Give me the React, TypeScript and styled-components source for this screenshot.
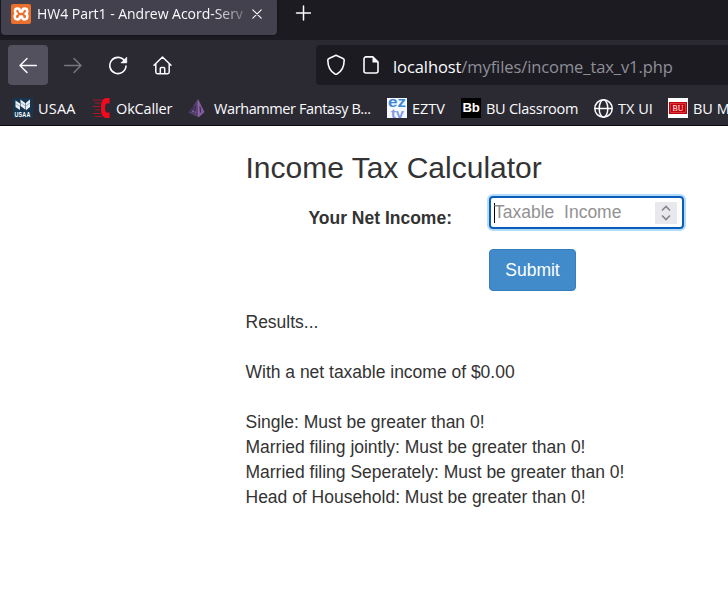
import React from "react";
import styled, { createGlobalStyle } from "styled-components";

const GlobalStyle = createGlobalStyle`
  * { box-sizing: border-box; }
  html, body { margin: 0; padding: 0; background: #fff; overflow: hidden; }
  svg { display: block; flex: none; }
`;

const Window = styled.div`
  width: 728px;
  height: 607px;
  overflow: hidden;
  display: flex;
  flex-direction: column;
  background: #fff;
`;

const Chrome = styled.header`
  flex: none;
  height: 126px;
  background: #2b2a33;
  border-bottom: 1px solid #0c0c0d;
  font-family: "Open Sans", "Noto Sans", sans-serif;
  color: #fbfbfe;
  overflow: hidden;
`;

const TabStrip = styled.div`
  display: flex;
  height: 40px;
  background: #1c1b22;
`;

const Tab = styled.div`
  display: flex;
  align-items: center;
  width: 276px;
  height: 35px;
  margin-left: 1px;
  padding: 0 10px 8px;
  background: #42414d;
  border-radius: 0 0 4px 4px;
  box-shadow: 0 0 3px rgba(0, 0, 0, 0.5);
`;

const TabTitle = styled.div`
  width: 215px;
  margin-left: 6px;
  overflow: hidden;
  white-space: pre;
  font-size: 14px;
  line-height: 20px;
  letter-spacing: -0.03px;
  mask-image: linear-gradient(to right, #000 176px, transparent 218px);
`;

const NewTab = styled.div`
  margin: 5px 0 0 18px;
`;

const Toolbar = styled.div`
  display: flex;
  align-items: center;
  height: 50px;
  padding-left: 8px;
`;

const NavButton = styled.div<{ $active?: boolean }>`
  display: flex;
  align-items: center;
  justify-content: center;
  width: 40px;
  height: 40px;
  margin-right: 5px;
  border-radius: 4px;
  background: ${(p) => (p.$active ? "#52515d" : "transparent")};
`;

const AddressBar = styled.div`
  display: flex;
  align-items: center;
  flex: 1;
  height: 40px;
  margin-left: 128px;
  padding-left: 10px;
  border-radius: 4px 0 0 4px;
  background: #1c1b22;
`;

const PageGap = styled.div`
  margin-left: 17px;
`;

const Address = styled.div`
  margin: 3px 0 0 14px;
  white-space: pre;
  font-size: 16.5px;
  line-height: 22px;
  letter-spacing: -0.09px;
  color: #8f8f98;
`;

const Host = styled.span`
  color: #fbfbfe;
`;

const Bookmarks = styled.div`
  display: flex;
  height: 35px;
  padding: 8px 0 0 13px;
`;

const Bookmark = styled.div<{ $width: number; $gap?: number; $spacing?: number }>`
  display: flex;
  flex: none;
  width: ${(p) => p.$width}px;
  height: 21px;
  gap: ${(p) => p.$gap ?? 5}px;
  white-space: pre;
  font-size: 14.5px;
  line-height: 22px;
  letter-spacing: ${(p) => p.$spacing ?? 0}px;
`;

const Page = styled.main`
  width: 482px;
  margin-left: 246px;
  font-family: "Liberation Sans", Arial, sans-serif;
  font-size: 17.5px;
  line-height: 25px;
  color: #333;
`;

const Title = styled.h3`
  margin: 25px 0 12px -0.5px;
  font-size: 30px;
  line-height: 33px;
  font-weight: 400;
  white-space: nowrap;
`;

const FormRow = styled.div`
  display: flex;
  height: 53px;
`;

const Label = styled.label`
  width: 206px;
  padding-top: 10px;
  margin-right: 37px;
  text-align: right;
  font-weight: 700;
`;

const NumberField = styled.div`
  display: flex;
  align-items: center;
  width: 195px;
  height: 33px;
  padding: 0 5px 0 3px;
  border: 2px solid #0a5cbd;
  border-radius: 4px;
  box-shadow: 0 0 0 2px #b3dcf9;
`;

const Caret = styled.div`
  width: 1px;
  height: 20px;
  margin-right: -1px;
  background: #000;
`;

const Placeholder = styled.div`
  flex: 1;
  white-space: pre;
  line-height: 25px;
  padding-bottom: 1px;
  color: #929292;
`;

const Spinner = styled.div`
  display: flex;
  align-items: center;
  justify-content: center;
  width: 22px;
  height: 22px;
  background: #e9e9ed;
`;

const SubmitButton = styled.button`
  display: block;
  width: 87px;
  height: 42px;
  margin: 0 0 19px 243px;
  padding: 0;
  border: 1px solid #357ebd;
  border-radius: 4px;
  background: #428bca;
  color: #fff;
  font: 17.5px/25px "Liberation Sans", Arial, sans-serif;
`;

const Results = styled.div`
  white-space: pre;
  letter-spacing: -0.01px;
`;

const ResultLine = styled.p<{ $after?: boolean }>`
  margin: 0 0 ${(p) => (p.$after ? 25 : 0)}px -0.5px;
`;

const stroke = { fill: "none", stroke: "#fbfbfe", strokeLinecap: "round", strokeLinejoin: "round" } as const;

const XamppIcon = () => (
  <svg width="20" height="20" viewBox="0 0 20 20">
    <rect width="20" height="20" rx="2" fill="#e9712d" />
    <path d="M5.600 9.700C3.300 8.800 3.400 4.600 6.400 4.600c2 0 2.600 1.200 2.600 2.900h2.200c0-1.700.6-2.900 2.600-2.900 3 0 3.200 4.200.8 5.100 2.700 1.100 2.300 5.700-.9 5.700-2 0-2.700-1.200-2.700-2.900H9c0 1.700-.7 2.900-2.700 2.900-3.200 0-3.500-4.600-.7-5.700z" fill="none" stroke="#fff" strokeWidth="2.500" strokeLinejoin="round" />
  </svg>
);

const CloseIcon = () => (
  <svg width="10" height="10" viewBox="0 0 10 10"><path d="M.8.8l8.4 8.4M9.2.8L.8 9.2" {...stroke} strokeWidth="1.15" /></svg>
);

const PlusIcon = () => (
  <svg width="16" height="16" viewBox="0 0 16 16"><path d="M8.500 1v14M1.500 8h14" {...stroke} strokeWidth="1.5" /></svg>
);

const ArrowIcon = ({ forward = false }: { forward?: boolean }) => (
  <svg width="20" height="20" viewBox="0 0 20 20">
    <path d={forward ? "M1.7 10.5h16.2M11 3.5l7 7-7 7" : "M18.3 10.5H2.1M9 3.5l-7 7 7 7"} {...stroke} stroke={forward ? "#777681" : "#fbfbfe"} strokeWidth="1.5" />
  </svg>
);

const ReloadIcon = () => (
  <svg width="20" height="20" viewBox="0 0 20 20">
    <path d="M16.8 6.2A8.1 8.1 0 1 0 18 11" {...stroke} strokeWidth="1.6" />
    <path d="M18.8 2v6h-6z" fill="#fbfbfe" stroke="#fbfbfe" strokeWidth=".5" strokeLinejoin="round" />
  </svg>
);

const HomeIcon = () => (
  <svg width="20" height="20" viewBox="0 0 20 20">
    <path d="M1 10.3L9.500 2l8.500 8.3M2.800 9v8.1a1.7 1.7 0 0 0 1.7 1.7h10a1.7 1.7 0 0 0 1.7-1.7V9M7.300 18.5v-5a1 1 0 0 1 1-1h2.4a1 1 0 0 1 1 1v5" {...stroke} strokeWidth="1.5" />
  </svg>
);

const ShieldIcon = () => (
  <svg width="20" height="22" viewBox="0 0 20 22">
    <path d="M10 1.3l7 3.1c.8.3 1.2 1 1.2 1.8-.1 6.3-2.6 11.2-7.2 13.8q-1 .5-2 0C4.400 17.400 1.900 12.500 1.800 6.200c0-.8.4-1.500 1.200-1.800z" {...stroke} strokeWidth="1.6" />
  </svg>
);

const PageIcon = () => (
  <svg width="16" height="18" viewBox="0 0 16 18">
    <path d="M3 .9h6.800l5.200 5.200V15a2 2 0 0 1-2 2H3a2 2 0 0 1-2-2V2.900a2 2 0 0 1 2-2z" {...stroke} strokeWidth="1.6" />
    <path d="M9.500.8v5.700h5.700z" fill="#fbfbfe" />
  </svg>
);

const UsaaIcon = () => (
  <svg width="20" height="20" viewBox="0 0 20 20">
    <rect width="20" height="20" fill="#17354f" />
    <path d="M2.500 2.500L7 5.500V12L2.500 9zM7.500 1.500l5 3.700v6.500l-5-3.700zM13 4.700L17 1.500V9l-4 3.200z" fill="#e9f0f5" />
    <path d="M2.500 5.500L7 8.500M7.500 4.500l5 3.700M13 8l4-3" stroke="#6c8496" strokeWidth=".6" />
    <text x="9.500" y="18.800" textAnchor="middle" fontFamily="Liberation Sans" fontWeight="700" fontSize="6.500" textLength="16" lengthAdjust="spacingAndGlyphs" fill="#fff">USAA</text>
  </svg>
);

const CallerIcon = () => (
  <svg width="20" height="20" viewBox="0 0 20 20">
    <path d="M17.500 0h-3C10.200.4 9 4 9 10s1.200 9.600 5.500 10h3v-5.500h-3c-1.200-1-1.500-2.300-1.500-4.500s.3-3.500 1.500-4.500h3z" fill="#f5091d" />
    <path d="M1 2h9M3 5h6M1 8.500h7M3 12h5M1 15.500h8M3 18.500h7" fill="none" stroke="#a31729" strokeWidth="1" />
  </svg>
);

const PyramidIcon = () => (
  <svg width="20" height="20" viewBox="0 0 20 20">
    <path d="M11 1L1.500 14.500 11.500 19.500z" fill="#56406d" />
    <path d="M11 1l6.500 13-6 5.500z" fill="#865aa3" />
    <path d="M7 8l-3.500 6M8.500 8.500L7 15.500M13 8.500l.5 6" fill="none" stroke="#33234a" strokeWidth="1" />
    <path d="M11 2.500l.5 16M5 13l4 1.500" fill="none" stroke="#a783bb" strokeWidth=".6" />
  </svg>
);

const EztvIcon = () => (
  <svg width="20" height="20" viewBox="0 0 20 20">
    <rect width="20" height="20" fill="#f4f9ff" />
    <text x="1" y="9" fontFamily="Liberation Sans" fontWeight="700" fontSize="14" textLength="18" lengthAdjust="spacingAndGlyphs" fill="#3d87d4">ez</text>
    <text x="4" y="19.500" fontFamily="Liberation Sans" fontWeight="700" fontSize="13" textLength="13" lengthAdjust="spacingAndGlyphs" fill="#8199e0">tv</text>
  </svg>
);

const BlackboardIcon = () => (
  <svg width="20" height="20" viewBox="0 0 20 20">
    <rect width="20" height="20" fill="#000" />
    <text x="10" y="14" textAnchor="middle" fontFamily="Liberation Sans" fontWeight="700" fontSize="12.500" textLength="17" lengthAdjust="spacingAndGlyphs" fill="#fff">Bb</text>
  </svg>
);

const GlobeIcon = () => (
  <svg width="20" height="20" viewBox="0 0 20 20">
    <g {...stroke} strokeWidth="1.500"><circle cx="9.500" cy="10.500" r="8.700" /><ellipse cx="9.500" cy="10.500" rx="4.300" ry="8.700" /><path d="M1 10.500h17" /></g>
  </svg>
);

const BuIcon = () => (
  <svg width="20" height="20" viewBox="0 0 20 20">
    <rect width="20" height="20" fill="#fff" />
    <rect x="1" y="4" width="18" height="12" fill="#c5000b" />
    <rect x="2.500" y="5.500" width="15" height="9" fill="none" stroke="#e34a50" strokeWidth=".7" />
    <text x="10" y="13" textAnchor="middle" fontFamily="Liberation Serif" fontSize="8" textLength="11" lengthAdjust="spacingAndGlyphs" fill="#fff">BU</text>
  </svg>
);

const SpinnerIcon = () => (
  <svg width="12" height="18" viewBox="0 0 12 18"><path d="M2 6.500l4-4 4 4M2 11.500l4 4 4-4" fill="none" stroke="#858589" strokeWidth="1.600" /></svg>
);

export default function App() {
  return (
    <Window>
      <GlobalStyle />
      <Chrome>
        <TabStrip>
          <Tab>
            <XamppIcon />
            <TabTitle>HW4 Part1 - Andrew Acord-Serv</TabTitle>
            <CloseIcon />
          </Tab>
          <NewTab><PlusIcon /></NewTab>
        </TabStrip>
        <Toolbar>
          <NavButton $active><ArrowIcon /></NavButton>
          <NavButton><ArrowIcon forward /></NavButton>
          <NavButton><ReloadIcon /></NavButton>
          <NavButton><HomeIcon /></NavButton>
          <AddressBar>
            <ShieldIcon />
            <PageGap><PageIcon /></PageGap>
            <Address><Host>localhost</Host>/myfiles/income_tax_v1.php</Address>
          </AddressBar>
        </Toolbar>
        <Bookmarks>
          <Bookmark $width={79} $spacing={0.2}><UsaaIcon />USAA</Bookmark>
          <Bookmark $width={95} $gap={4} $spacing={-0.15}><CallerIcon />OkCaller</Bookmark>
          <Bookmark $width={200} $gap={7} $spacing={-0.4}><PyramidIcon />Warhammer Fantasy B...</Bookmark>
          <Bookmark $width={74}><EztvIcon />EZTV</Bookmark>
          <Bookmark $width={133} $spacing={-0.25}><BlackboardIcon />BU Classroom</Bookmark>
          <Bookmark $width={74} $gap={4}><GlobeIcon />TX UI</Bookmark>
          <Bookmark $width={80}><BuIcon />BU M</Bookmark>
        </Bookmarks>
      </Chrome>
      <Page>
        <Title>Income Tax Calculator</Title>
        <FormRow>
          <Label>Your Net Income:</Label>
          <NumberField>
            <Caret />
            <Placeholder>Taxable  Income</Placeholder>
            <Spinner><SpinnerIcon /></Spinner>
          </NumberField>
        </FormRow>
        <SubmitButton type="button">Submit</SubmitButton>
        <Results>
          <ResultLine $after>Results...</ResultLine>
          <ResultLine $after>With a net taxable income of $0.00</ResultLine>
          <ResultLine>Single: Must be greater than 0!</ResultLine>
          <ResultLine>Married filing jointly: Must be greater than 0!</ResultLine>
          <ResultLine>Married filing Seperately: Must be greater than 0!</ResultLine>
          <ResultLine>Head of Household: Must be greater than 0!</ResultLine>
        </Results>
      </Page>
    </Window>
  );
}
